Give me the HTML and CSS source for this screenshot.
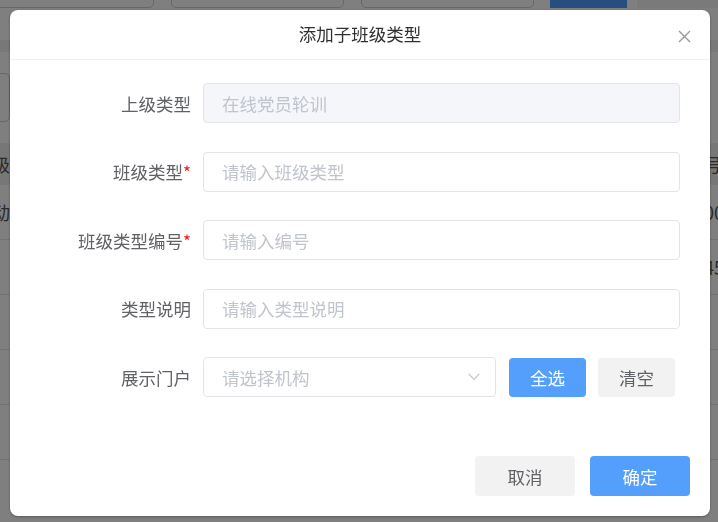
FILE: index.html
```html
<!DOCTYPE html>
<html lang="zh-CN">
<head>
<meta charset="utf-8">
<title>添加子班级类型</title>
<link rel="stylesheet" href="styles.css">
</head>
<body>
<div class="page">
  <div class="toolbar">
    <span class="tb-box tb-1"></span>
    <span class="tb-box tb-2"></span>
    <span class="tb-box tb-3"></span>
    <span class="tb-btn"></span>
    <span class="tb-rest"></span>
  </div>
  <div class="tabband"></div>
  <div class="actions"><span class="act-box"></span></div>
  <div class="table">
    <div class="tr th"><span class="cell-l">类型层级</span><span class="cell-m"></span><span class="cell-r"><span class="shift">编号</span></span></div>
    <div class="tr"><span class="cell-l">党员活动</span><span class="cell-m"></span><span class="cell-r">0012</span></div>
    <div class="tr"><span class="cell-l"></span><span class="cell-m"></span><span class="cell-r">4521</span></div>
    <div class="tr"><span class="cell-l"></span><span class="cell-m"></span><span class="cell-r"></span></div>
    <div class="tr"><span class="cell-l"></span><span class="cell-m"></span><span class="cell-r"></span></div>
    <div class="tr"><span class="cell-l"></span><span class="cell-m"></span><span class="cell-r"></span></div>
  </div>
</div>

<div class="mask">
  <div class="dialog">
    <div class="dlg-header">
      <span></span>
      <span class="dlg-title">添加子班级类型</span>
      <span class="dlg-close">
        <svg width="13" height="13" viewBox="0 0 13 13"><path d="M1 1L12 12M12 1L1 12" stroke="#999" stroke-width="1.4" fill="none"/></svg>
      </span>
    </div>
    <div class="dlg-body">
      <div class="row">
        <label class="label">上级类型</label>
        <div class="input disabled">在线党员轮训</div>
      </div>
      <div class="row">
        <label class="label">班级类型<span class="req">*</span></label>
        <div class="input placeholder">请输入班级类型</div>
      </div>
      <div class="row">
        <label class="label">班级类型编号<span class="req">*</span></label>
        <div class="input placeholder">请输入编号</div>
      </div>
      <div class="row">
        <label class="label">类型说明</label>
        <div class="input placeholder">请输入类型说明</div>
      </div>
      <div class="row">
        <label class="label">展示门户</label>
        <div class="select-line">
          <div class="input select placeholder">
            <span>请选择机构</span>
            <svg width="12" height="8" viewBox="0 0 12 8"><path d="M0.7 0.8L6 6.3L11.3 0.8" stroke="#c0c4cc" stroke-width="1.2" fill="none"/></svg>
          </div>
          <button class="btn btn-primary btn-sm">全选</button>
          <button class="btn btn-plain btn-sm">清空</button>
        </div>
      </div>
    </div>
    <div class="dlg-footer">
      <button class="btn btn-plain btn-lg">取消</button>
      <button class="btn btn-primary btn-lg">确定</button>
    </div>
  </div>
</div>
</body>
</html>
```

FILE: styles.css
```css
html, body {
  margin: 0;
  padding: 0;
}
body {
  width: 718px;
  height: 522px;
  overflow: hidden;
  background: #ffffff;
  font-family: "Noto Sans CJK SC", "Noto Sans", sans-serif;
  color: #333;
}

/* ---------- background page ---------- */
.page {
  width: 718px;
}
.toolbar {
  display: flex;
  height: 40px;
  margin-top: -32px;
  margin-left: -6px;
}
.tb-box {
  height: 38px;
  border: 1px solid #cfcfcf;
  border-radius: 5px;
  box-sizing: content-box;
}
.tb-1 { width: 158px; }
.tb-2 { width: 171px; margin-left: 17px; }
.tb-3 { width: 171px; margin-left: 17px; }
.tb-btn {
  width: 77px;
  margin-left: 16px;
  background: #509afe;
}
.tb-rest {
  flex: 1;
  margin-left: 10px;
  background: #f4f4f4;
}
.tabband {
  height: 12px;
  margin-top: 32px;
  background: #f0f0f0;
}
.actions {
  margin-top: 21px;
  height: 49px;
  display: flex;
}
.act-box {
  width: 40px;
  margin-left: -32px;
  border: 1px solid #cfcfcf;
  border-radius: 5px;
}
.table {
  margin-top: 21px;
}
.tr {
  display: grid;
  grid-template-columns: 10px 1fr 14px;
  height: 55px;
  border-bottom: 1px solid #e6e6e6;
  box-sizing: border-box;
  font-size: 18px;
  color: #555;
}
.tr.th {
  height: 42px;
  background: #eeeeee;
  border-bottom: none;
}
.cell-l {
  display: flex;
  justify-content: flex-end;
  align-items: center;
  overflow: hidden;
  white-space: nowrap;
}
.cell-r {
  display: flex;
  align-items: center;
  overflow: hidden;
  white-space: nowrap;
}
.shift {
  margin-left: -18px;
}

/* ---------- mask + dialog ---------- */
.mask {
  position: fixed;
  inset: 0;
  background: rgba(0, 0, 0, 0.5);
  padding: 10px 8px 6px 10px;
  display: flex;
  align-items: flex-start;
}
.dialog {
  width: 700px;
  height: 506px;
  background: #fff;
  border-radius: 8px;
  box-shadow: 0 1px 3px rgba(0, 0, 0, 0.3);
  display: flex;
  flex-direction: column;
  overflow: hidden;
}
.dlg-header {
  height: 49px;
  border-bottom: 1px solid #f1f1f1;
  display: grid;
  grid-template-columns: 1fr auto 1fr;
  align-items: center;
}
.dlg-title {
  font-size: 17.5px;
  color: #303133;
  line-height: 1;
  margin-top: -1px;
}
.dlg-close {
  justify-self: end;
  margin-right: 19px;
  margin-top: 4px;
  display: flex;
}

.dlg-body {
  flex: 1;
  padding: 23px 30px 0 0;
  display: flex;
  flex-direction: column;
  gap: 28.5px;
}
.row {
  display: flex;
  align-items: center;
  height: 40px;
}
.label {
  width: 181px;
  padding-right: 12px;
  text-align: right;
  font-size: 17.5px;
  color: #606266;
  white-space: nowrap;
}
.req {
  color: #f11;
  font-size: 17px;
}
.input {
  flex: 1;
  height: 40px;
  box-sizing: border-box;
  border: 1px solid #e2e4ea;
  border-radius: 4px;
  padding: 0 15px 0 18px;
  display: flex;
  align-items: center;
  font-size: 17.5px;
  color: #c0c4cc;
  background: #fff;
}
.input.disabled {
  background: #f5f6fa;
  color: #c0c4cc;
}
.select-line {
  flex: 1;
  display: flex;
  align-items: center;
  height: 40px;
}
.input.select {
  flex: 0 0 293px;
  justify-content: space-between;
}
.btn {
  border: none;
  border-radius: 4px;
  font-family: "Noto Sans CJK SC", "Noto Sans", sans-serif;
  padding: 0;
  cursor: pointer;
}
.btn-primary {
  background: #539ffb;
  color: #fff;
}
.btn-plain {
  background: #f2f2f2;
  color: #606266;
}
.btn-sm {
  width: 77px;
  height: 39px;
  font-size: 17.5px;
  margin-left: 13px;
}
.btn-sm + .btn-sm {
  margin-left: 12px;
}
.dlg-footer {
  display: flex;
  justify-content: flex-end;
  gap: 15px;
  padding: 0 20px 20px 0;
}
.btn-lg {
  width: 100px;
  height: 40px;
  font-size: 17.5px;
}
```
